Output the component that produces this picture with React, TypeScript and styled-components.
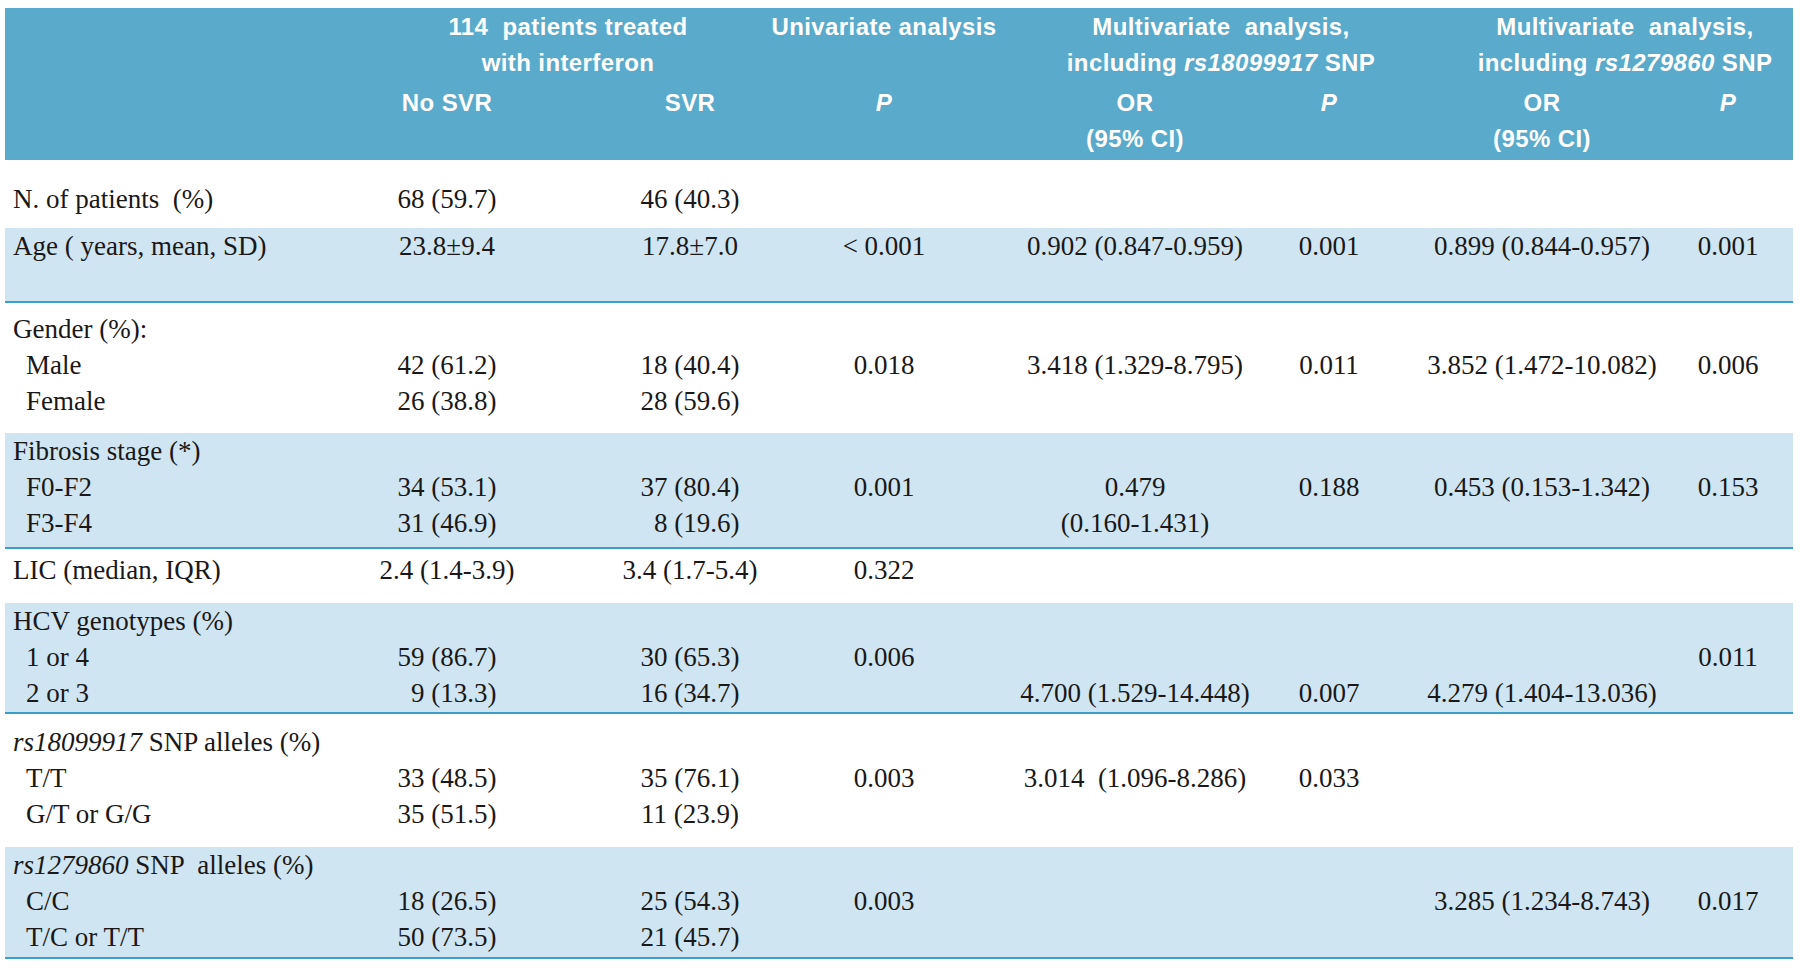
import React from "react";
import styled, { createGlobalStyle } from "styled-components";

const GlobalStyle = createGlobalStyle`
  html, body { margin: 0; padding: 0; background: #ffffff; }
  body {
    font-family: "Liberation Serif", "Times New Roman", serif;
    color: #1a1818;
  }
`;

const COLS = "269px 346px 140px 248px 254px 134px 292px 80px 1fr";
const GROUP_COLS = "348px 430px 202px 472px 336px";

const Page = styled.div`
  padding: 8px 7px 9px 5px;
`;

const Table = styled.div`
  width: 1788px;
  display: flex;
  flex-direction: column;
`;

const Header = styled.div`
  background: #5aaacb;
  color: #ffffff;
  font-family: "Liberation Sans", Arial, sans-serif;
  font-weight: 700;
  font-size: 24px;
  letter-spacing: 0.4px;
  line-height: 36px;
  padding: 1px 0 3px;
  display: flex;
  flex-direction: column;
  gap: 4px;
`;

const HeaderGroupRow = styled.div`
  display: grid;
  grid-template-columns: ${GROUP_COLS};
`;

const HeaderColRow = styled.div`
  display: grid;
  grid-template-columns: ${COLS};
`;

const HeadCell = styled.div<{ $col: number }>`
  grid-column: ${(p) => p.$col};
  display: flex;
  flex-direction: column;
  align-items: center;
  white-space: pre;
`;

const Em = styled.i`
  font-style: italic;
`;

const Group = styled.div<{ $band?: boolean; $pt: number; $pb: number }>`
  background: ${(p) => (p.$band ? "#cfe5f1" : "transparent")};
  border-bottom: ${(p) => (p.$band ? "2px solid #3c9fc9" : "none")};
  padding: ${(p) => p.$pt}px 0 ${(p) => p.$pb}px;
`;

const Line = styled.div`
  display: grid;
  grid-template-columns: ${COLS};
  height: 36px;
  align-items: center;
  font-size: 27px;
`;

const Label = styled.div<{ $indent?: boolean }>`
  padding-left: ${(p) => (p.$indent ? 21 : 8)}px;
  white-space: pre;
`;

const Value = styled.div`
  display: flex;
  justify-content: center;
  white-space: pre;
`;

type Row = { label: React.ReactNode; indent?: boolean; v: string[] };
type GroupDef = { band?: boolean; pt: number; pb: number; rows: Row[] };

const F = "\u2007";

const groups: GroupDef[] = [
  {
    pt: 21,
    pb: 11,
    rows: [{ label: "N. of patients  (%)", v: ["68 (59.7)", "46 (40.3)"] }],
  },
  {
    band: true,
    pt: 0,
    pb: 37,
    rows: [
      {
        label: "Age ( years, mean, SD)",
        v: ["23.8±9.4", "17.8±7.0", "< 0.001", "0.902 (0.847-0.959)", "0.001", "0.899 (0.844-0.957)", "0.001"],
      },
    ],
  },
  {
    pt: 8,
    pb: 14,
    rows: [
      { label: "Gender (%):", v: [] },
      {
        label: "Male",
        indent: true,
        v: ["42 (61.2)", "18 (40.4)", "0.018", "3.418 (1.329-8.795)", "0.011", "3.852 (1.472-10.082)", "0.006"],
      },
      { label: "Female", indent: true, v: ["26 (38.8)", "28 (59.6)"] },
    ],
  },
  {
    band: true,
    pt: 0,
    pb: 6,
    rows: [
      { label: "Fibrosis stage (*)", v: [] },
      {
        label: "F0-F2",
        indent: true,
        v: ["34 (53.1)", "37 (80.4)", "0.001", "0.479", "0.188", "0.453 (0.153-1.342)", "0.153"],
      },
      { label: "F3-F4", indent: true, v: ["31 (46.9)", F + "8 (19.6)", "", "(0.160-1.431)"] },
    ],
  },
  {
    pt: 3,
    pb: 15,
    rows: [{ label: "LIC (median, IQR)", v: ["2.4 (1.4-3.9)", "3.4 (1.7-5.4)", "0.322"] }],
  },
  {
    band: true,
    pt: 0,
    pb: 1,
    rows: [
      { label: "HCV genotypes (%)", v: [] },
      { label: "1 or 4", indent: true, v: ["59 (86.7)", "30 (65.3)", "0.006", "", "", "", "0.011"] },
      {
        label: "2 or 3",
        indent: true,
        v: [F + "9 (13.3)", "16 (34.7)", "", "4.700 (1.529-14.448)", "0.007", "4.279 (1.404-13.036)"],
      },
    ],
  },
  {
    pt: 10,
    pb: 15,
    rows: [
      {
        label: (
          <>
            <Em>rs18099917</Em> SNP alleles (%)
          </>
        ),
        v: [],
      },
      {
        label: "T/T",
        indent: true,
        v: ["33 (48.5)", "35 (76.1)", "0.003", "3.014  (1.096-8.286)", "0.033"],
      },
      { label: "G/T or G/G", indent: true, v: ["35 (51.5)", "11 (23.9)"] },
    ],
  },
  {
    band: true,
    pt: 0,
    pb: 2,
    rows: [
      {
        label: (
          <>
            <Em>rs1279860</Em> SNP  alleles (%)
          </>
        ),
        v: [],
      },
      {
        label: "C/C",
        indent: true,
        v: ["18 (26.5)", "25 (54.3)", "0.003", "", "", "3.285 (1.234-8.743)", "0.017"],
      },
      { label: "T/C or T/T", indent: true, v: ["50 (73.5)", "21 (45.7)"] },
    ],
  },
];

export default function App() {
  return (
    <Page>
      <GlobalStyle />
      <Table>
        <Header>
          <HeaderGroupRow>
            <HeadCell $col={2}>
              <span>114  patients treated</span>
              <span>with interferon</span>
            </HeadCell>
            <HeadCell $col={3}>
              <span>Univariate analysis</span>
            </HeadCell>
            <HeadCell $col={4}>
              <span>Multivariate  analysis,</span>
              <span>
                including <Em>rs18099917</Em> SNP
              </span>
            </HeadCell>
            <HeadCell $col={5}>
              <span>Multivariate  analysis,</span>
              <span>
                including <Em>rs1279860</Em> SNP
              </span>
            </HeadCell>
          </HeaderGroupRow>
          <HeaderColRow>
            <HeadCell $col={2}>
              <span>No SVR</span>
            </HeadCell>
            <HeadCell $col={3}>
              <span>SVR</span>
            </HeadCell>
            <HeadCell $col={4}>
              <Em>P</Em>
            </HeadCell>
            <HeadCell $col={5}>
              <span>OR</span>
              <span>(95% CI)</span>
            </HeadCell>
            <HeadCell $col={6}>
              <Em>P</Em>
            </HeadCell>
            <HeadCell $col={7}>
              <span>OR</span>
              <span>(95% CI)</span>
            </HeadCell>
            <HeadCell $col={8}>
              <Em>P</Em>
            </HeadCell>
          </HeaderColRow>
        </Header>
        {groups.map((g, gi) => (
          <Group key={gi} $band={g.band} $pt={g.pt} $pb={g.pb}>
            {g.rows.map((r, ri) => (
              <Line key={ri}>
                <Label $indent={r.indent}>{r.label}</Label>
                {Array.from({ length: 7 }).map((_, ci) => (
                  <Value key={ci}>{r.v[ci] ?? ""}</Value>
                ))}
              </Line>
            ))}
          </Group>
        ))}
      </Table>
    </Page>
  );
}
